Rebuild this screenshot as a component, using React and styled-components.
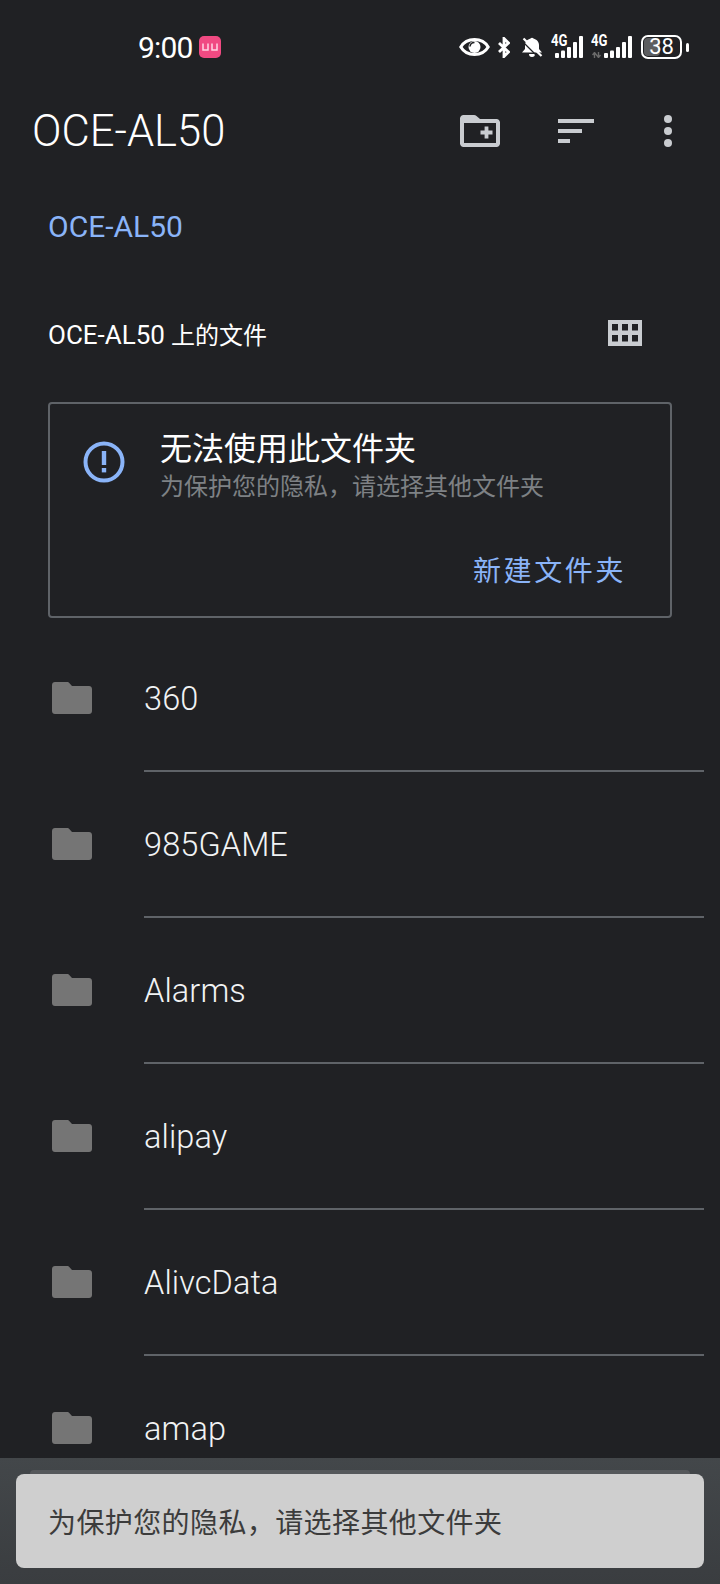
import styled, { createGlobalStyle } from "styled-components";

const FONT = `Roboto, "Noto Sans CJK SC", sans-serif`;

const HINT = "为保护您的隐私\uFF0C请选择其他文件夹";

const folders = ["360", "985GAME", "Alarms", "alipay", "AlivcData", "amap"];

const GlobalStyle = createGlobalStyle`
    html, body {
        margin: 0;
        padding: 0;
        background: #202124;
    }
    * {
        box-sizing: border-box;
    }
`;

function Eye() {
    return (
        <svg width="31" height="18" viewBox="0 0 31 18">
            <path d="M1.800 9C5 3.500 10 1.500 15.500 1.500S26 3.500 29.200 9C26 14.500 21 16.500 15.500 16.500S5 14.500 1.800 9Z" fill="none" stroke="#fff" strokeWidth="3" />
            <circle cx="15.500" cy="9" r="6" fill="#fff" />
            <path d="M11 8.500A4.500 4.500 0 0 1 15.500 4.500" fill="none" stroke="#202124" strokeWidth="1.600" />
        </svg>
    );
}

function Bluetooth() {
    return (
        <svg width="12" height="21" viewBox="0 0 12 21">
            <path d="M1 6l9.500 9-4.500 4.500v-18L10.500 6 1 15" fill="none" stroke="#fff" strokeWidth="2.800" />
        </svg>
    );
}

function BellOff() {
    return (
        <svg width="22" height="20" viewBox="0 0 22 20">
            <path d="M9.500 1.500a2 2 0 0 1 3 0c3 .8 5.500 3.300 5.500 6.500v4l3 3.500H1l3-3.500V8c0-3.200 2.500-5.700 5.500-6.500ZM8 17h6a3 3 0 0 1-6 0Z" fill="#fff" />
            <path d="M1 4l15 15" stroke="#202124" strokeWidth="1.300" />
            <path d="M2.500 1.500l18 17.500" stroke="#fff" strokeWidth="2.200" />
        </svg>
    );
}

function Signal({ roaming }) {
    const bars = [5, 7.500, 11, 16, 22];
    return (
        <SignalWrap $roaming={roaming}>
            <SignalLabel>4G</SignalLabel>
            {roaming && (
                <Arrows width="9" height="6" viewBox="0 0 9 6">
                    <path d="M2.500 6V1M.5 3l2-2.500L4.500 3M6.500 0v5M4.500 3l2 2.500L8.500 3" fill="none" stroke="#6a6a6a" strokeWidth="1.400" />
                </Arrows>
            )}
            <svg width="28" height="22" viewBox="0 0 28 22">
                {bars.map((h, i) => (
                    <rect key={i} x={i * 6} y={22 - h} width="4" height={h} rx="1" fill="#fff" />
                ))}
            </svg>
        </SignalWrap>
    );
}

function FolderPlus() {
    return (
        <svg width="40" height="32" viewBox="0 0 40 32">
            <path fillRule="evenodd" d="M3.500 0H14C15 0 15.800.4 16.500 1L20 4H36.500C38.400 4 40 5.600 40 7.500V28.500C40 30.400 38.400 32 36.500 32H3.500C1.600 32 0 30.400 0 28.500V3.500C0 1.600 1.600 0 3.500 0ZM4 8V28H36V8Z" fill="#c9ccd0" />
            <path d="M26.500 11.500v12M20.500 17.500h12" stroke="#c9ccd0" strokeWidth="3.800" />
        </svg>
    );
}

function SortIcon() {
    return (
        <svg width="36" height="24" viewBox="0 0 36 24" fill="#c9ccd0">
            <rect width="36" height="4" />
            <rect y="10" width="24" height="4" />
            <rect y="20" width="12" height="4" />
        </svg>
    );
}

function MoreIcon() {
    return (
        <svg width="8" height="32" viewBox="0 0 8 32" fill="#c9ccd0">
            <circle cx="4" cy="4" r="4" />
            <circle cx="4" cy="16" r="4" />
            <circle cx="4" cy="28" r="4" />
        </svg>
    );
}

function GridIcon() {
    return (
        <svg width="34" height="26" viewBox="0 0 34 26">
            <path fillRule="evenodd" d="M0 0H34V26H0ZM4 4V10.500H10V4ZM14 4V10.500H20V4ZM24 4V10.500H30V4ZM4 15V21.500H10V15ZM14 15V21.500H20V15ZM24 15V21.500H30V15Z" fill="#c9ccd0" />
        </svg>
    );
}

function AlertIcon() {
    return (
        <svg width="42" height="42" viewBox="0 0 42 42">
            <circle cx="21" cy="21" r="18.500" fill="none" stroke="#8ab4f8" strokeWidth="4" />
            <rect x="18.800" y="10" width="4.400" height="14" fill="#8ab4f8" />
            <rect x="18.800" y="27" width="4.400" height="4.400" fill="#8ab4f8" />
        </svg>
    );
}

function FolderIcon() {
    return (
        <FolderSvg width="40" height="32" viewBox="0 0 40 32">
            <path d="M3 0H15C16 0 17 .5 17.500 1.200L20 4H37C38.700 4 40 5.300 40 7V29C40 30.700 38.700 32 37 32H3C1.300 32 0 30.700 0 29V3C0 1.300 1.300 0 3 0Z" fill="#757575" />
        </FolderSvg>
    );
}

function BiliBadge() {
    return (
        <svg width="22" height="22" viewBox="0 0 22 22">
            <rect width="22" height="22" rx="5" fill="#f04a82" />
            <path d="M4 7.500v6.500h5V7.500M13 7.500v6.500h5V7.500" fill="none" stroke="#ffd5e3" strokeWidth="1.500" />
        </svg>
    );
}

function App() {
    return (
        <>
            <GlobalStyle />
            <Screen>
                <StatusBar>
                    <StatusLeft>
                        <Clock>9:00</Clock>
                        <BiliBadge />
                    </StatusLeft>
                    <StatusRight>
                        <Eye />
                        <Bluetooth />
                        <BellSlot>
                            <BellOff />
                        </BellSlot>
                        <Signal />
                        <Signal roaming />
                        <Battery>
                            <BatteryBody>
                                <BatteryFill />
                                <BatteryText>38</BatteryText>
                            </BatteryBody>
                            <BatteryNub />
                        </Battery>
                    </StatusRight>
                </StatusBar>

                <Toolbar>
                    <Title>OCE-AL50</Title>
                    <ToolbarIcons>
                        <FolderPlus />
                        <SortIcon />
                        <MoreIcon />
                    </ToolbarIcons>
                </Toolbar>

                <Breadcrumb>OCE-AL50</Breadcrumb>

                <SectionHeader>
                    <SectionTitle>
                        <SectionDevice>OCE-AL50</SectionDevice> 上的文件
                    </SectionTitle>
                    <GridIcon />
                </SectionHeader>

                <Notice>
                    <NoticeTop>
                        <AlertIcon />
                        <NoticeText>
                            <NoticeTitle>无法使用此文件夹</NoticeTitle>
                            <NoticeSub>{HINT}</NoticeSub>
                        </NoticeText>
                    </NoticeTop>
                    <NoticeAction>新建文件夹</NoticeAction>
                </Notice>

                <FolderList>
                    {folders.map((name) => (
                        <FolderRow key={name}>
                            <FolderIcon />
                            <FolderName>{name}</FolderName>
                        </FolderRow>
                    ))}
                </FolderList>

                <BottomPanel>
                    <Snackbar>{HINT}</Snackbar>
                </BottomPanel>
            </Screen>
        </>
    );
}

const Screen = styled.div`
    width: 720px;
    height: 1584px;
    display: flex;
    flex-direction: column;
    overflow: hidden;
    background: #202124;
    color: #fff;
    font-family: ${FONT};
`;

const StatusBar = styled.div`
    height: 94px;
    flex: none;
    display: flex;
    justify-content: space-between;
    align-items: center;
    padding: 0 31px 0 138px;
`;

const StatusLeft = styled.div`
    display: flex;
    align-items: center;
    gap: 6px;
`;

const Clock = styled.span`
    font-size: 30px;
    letter-spacing: -0.8px;
`;

const StatusRight = styled.div`
    display: flex;
    align-items: center;
    gap: 8px;
`;

const BellSlot = styled.div`
    display: flex;
    margin-left: 3px;
`;

const SignalWrap = styled.div`
    position: relative;
    width: ${(p) => (p.$roaming ? "41px" : "32px")};
    height: 22px;
    display: flex;
    justify-content: flex-end;
`;

const SignalLabel = styled.span`
    position: absolute;
    left: 0;
    top: -2px;
    font-size: 16px;
    line-height: 14px;
    font-weight: 700;
    transform: scaleX(0.82);
    transform-origin: left;
`;

const Arrows = styled.svg`
    position: absolute;
    left: 1px;
    bottom: 0;
`;

const Battery = styled.div`
    display: flex;
    align-items: center;
    gap: 4px;
    margin-left: 1px;
`;

const BatteryBody = styled.div`
    position: relative;
    width: 41px;
    height: 24px;
    border: 2px solid #fff;
    border-radius: 7px;
    display: flex;
    align-items: center;
    justify-content: center;
    overflow: hidden;
`;

const BatteryFill = styled.div`
    position: absolute;
    left: 1px;
    top: 1px;
    bottom: 1px;
    width: 42%;
    border-radius: 4px;
    background: #5c5d5f;
`;

const BatteryText = styled.span`
    position: relative;
    font-size: 22px;
    line-height: 20px;
`;

const BatteryNub = styled.div`
    width: 3px;
    height: 9px;
    border-radius: 1.500px;
    background: #fff;
`;

const Toolbar = styled.div`
    height: 74px;
    flex: none;
    display: flex;
    align-items: center;
    justify-content: space-between;
    padding: 0 48px 0 32px;
`;

const Title = styled.h1`
    margin: 0;
    font-size: 43.500px;
    font-weight: 300;
`;

const ToolbarIcons = styled.div`
    display: flex;
    align-items: center;
    margin-left: auto;
    gap: 58px;

    svg:nth-child(2) {
        margin-right: 12px;
    }
`;

const Breadcrumb = styled.div`
    margin: 41px 0 0 48px;
    height: 36px;
    font-size: 30px;
    font-weight: 400;
    line-height: 36px;
    color: #8ab4f8;
`;

const SectionHeader = styled.div`
    margin-top: 68px;
    height: 40px;
    flex: none;
    display: flex;
    align-items: center;
    justify-content: space-between;
    padding: 0 78px 0 48px;
`;

const SectionTitle = styled.span`
    font-size: 24px;
`;

const SectionDevice = styled.span`
    font-size: 26px;
`;

const Notice = styled.div`
    margin: 49px 48px 0 48px;
    height: 216px;
    flex: none;
    border: 2px solid #5f6368;
    border-radius: 4px;
    padding: 23px 44px 0 33px;
    display: flex;
    flex-direction: column;
`;

const NoticeTop = styled.div`
    display: flex;
    align-items: flex-start;
    gap: 35px;

    svg {
        margin-top: 14px;
    }
`;

const NoticeText = styled.div`
    display: flex;
    flex-direction: column;
`;

const NoticeTitle = styled.div`
    font-size: 32px;
    line-height: 44px;
`;

const NoticeSub = styled.div`
    font-size: 24px;
    line-height: 32px;
    color: #7e8185;
`;

const NoticeAction = styled.div`
    margin: 49px 0 0 auto;
    font-size: 28px;
    line-height: 40px;
    letter-spacing: 2.600px;
    color: #8ab4f8;
`;

const FolderList = styled.div`
    flex: 1;
    min-height: 0;
    overflow: hidden;
    margin-top: 8px;
`;

const FolderRow = styled.div`
    position: relative;
    height: 146px;
    flex: none;
    display: flex;
    align-items: center;
    gap: 52px;
    padding: 0 0 0 52px;

    &::after {
        content: "";
        position: absolute;
        left: 144px;
        right: 16px;
        bottom: 0;
        height: 2px;
        background: #5f6368;
    }
`;

const FolderSvg = styled.svg`
    margin-bottom: 2px;
`;

const FolderName = styled.span`
    font-size: 32.500px;
    font-weight: 300;
    letter-spacing: 0.1px;
    color: #f1f3f4;
`;

const BottomPanel = styled.div`
    position: relative;
    height: 126px;
    flex: none;
    padding: 16px 16px;
    background: linear-gradient(#43474a, #3a3d40);

    &::before {
        content: "";
        position: absolute;
        left: 30px;
        right: 30px;
        top: 12px;
        height: 10px;
        border-radius: 4px 4px 0 0;
        background: #55585b;
    }
`;

const Snackbar = styled.div`
    position: relative;
    height: 94px;
    display: flex;
    align-items: center;
    padding-left: 32px;
    border-radius: 8px;
    background: #cfcfcf;
    color: #3c3c3c;
    font-size: 28px;
    letter-spacing: 0.4px;
`;

export default App;
